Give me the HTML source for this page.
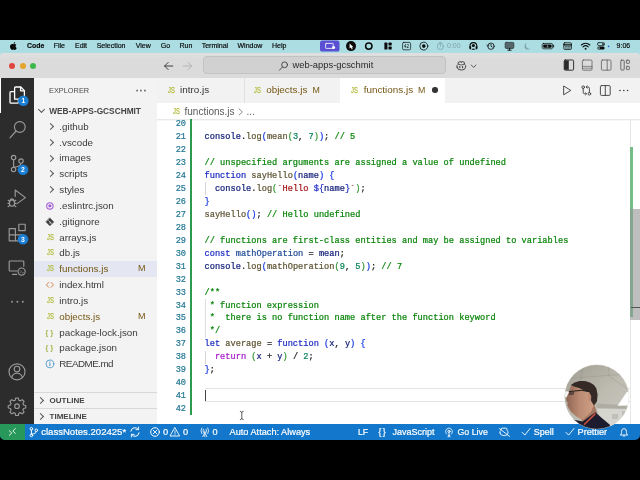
<!DOCTYPE html>
<html><head><meta charset="utf-8">
<style>
*{box-sizing:border-box;margin:0;padding:0}
html,body{width:640px;height:480px;overflow:hidden;background:#000;font-family:"Liberation Sans",sans-serif;}
.abs,.abs2 *{position:absolute}
div,span,i,svg{position:absolute}
#menubar{left:0;top:40px;width:640px;height:18px;background:#abdde3;font-size:7px;-webkit-text-stroke:0.18px #0b0b0b;color:#0b0b0b;line-height:12px;white-space:nowrap}
#menubar span{top:0}
#title{left:0;top:52.5px;width:640px;height:25.5px;background:linear-gradient(#e0e0e0,#dbdbdb 6px);border-radius:3.5px 3.5px 0 0}
.dot{top:10px;width:6.2px;height:6.2px;border-radius:50%}
#search{left:202.5px;top:3.9px;width:243.5px;height:17.2px;border-radius:4px;background:#d1d1d1;border:0.6px solid #c2c2c2;font-size:9.4px;color:#2a2a2a;line-height:16px;white-space:nowrap}
#act{left:0;top:78px;width:34px;height:346px;background:#2c2c2c}
#side{left:34px;top:78px;width:123px;z-index:2;height:346px;background:#f3f3f3;font-size:9.8px;color:#3b3b3b}
.row{left:0;width:123px;height:15.83px;line-height:15.83px;white-space:nowrap}
.row .ic{left:12.6px;top:0;width:12px;text-align:left;font-size:8.2px;font-weight:normal;transform:scaleX(0.71);transform-origin:0 50%;-webkit-text-stroke:0.25px currentColor}
.row .nm{left:25.3px;top:0}
.row .m{left:104px;top:0;color:#745714;font-size:9px}
.chev{left:14.2px;top:5.2px;width:5px;height:5px;border-right:0.8px solid #555;border-bottom:0.8px solid #555;transform:rotate(-45deg)}
#tabs{left:156px;top:78px;width:484px;height:24.5px;background:#f2f2f2;font-size:9.9px;color:#333}
.tab{top:0;height:24.5px;line-height:24.5px;white-space:nowrap}
.tab span{top:0.4px}
.tab span.js{top:1.2px}
.js{color:#b3bb3a;font-size:8.2px;font-weight:normal;transform:scaleX(0.71);transform-origin:0 50%;-webkit-text-stroke:0.25px #b3bb3a}
#crumb{left:156px;top:102.5px;width:484px;height:16px;background:#fff;font-size:10px;color:#5a5a5a;line-height:17px;white-space:nowrap}
#ed{left:156px;top:118.5px;width:484px;height:305.5px;background:#fff;font-family:"Liberation Mono",monospace;font-size:8.65px;overflow:hidden}
.ln{left:0;width:30px;text-align:right;color:#237893;height:13px;line-height:13px;-webkit-text-stroke:0.2px #237893}
.cl{left:48.5px;letter-spacing:0.022px;height:13px;line-height:13px;white-space:pre;color:#222;-webkit-text-stroke:0.22px currentColor}
.c{color:#0a850a;position:static}
.k{color:#1c2cc4;position:static}
.s{color:#a31515;position:static}
.n{color:#098658;position:static}
.f{color:#5e5434;position:static}
.v{color:#14207a;position:static}
.cv{color:#1f4a96;position:static}
.r{color:#a518c8;position:static}
.b1{color:#1438e0;position:static}
.b2{color:#319331;position:static}
#status{left:0;top:424px;width:640px;height:16px;background:#1377cb;color:#fff;font-size:9.2px;-webkit-text-stroke:0.2px #fff;line-height:16px;white-space:nowrap;border-radius:0 0 5px 5px;overflow:hidden}
#status span{top:0}
#root{left:0;top:0;width:640px;height:480px;will-change:transform;transform:translateZ(0)}
</style></head><body>
<div id="root">
<div id="menubar">
<span style="left:27px;font-weight:bold;font-size:6.9px">Code</span>
<span style="left:53.7px">File</span>
<span style="left:75px">Edit</span>
<span style="left:96.7px">Selection</span>
<span style="left:135.7px">View</span>
<span style="left:160.7px">Go</span>
<span style="left:179.5px">Run</span>
<span style="left:201.7px">Terminal</span>
<span style="left:237.5px">Window</span>
<span style="left:272px">Help</span>
<span style="left:447px;color:#7fa3a8;font-size:7px;-webkit-text-stroke:0">0:00</span>
<span style="left:616.6px">9:06</span>
<svg style="left:0;top:0" width="640" height="12.5" viewBox="0 0 640 12.5" fill="none" stroke="#0b0b0b" stroke-width="0.9" stroke-linecap="round" stroke-linejoin="round">
<!-- apple -->
<path d="M13.7 4.3 c0.9 -0.5 2 -0.3 2.7 0.5 c-1.2 0.8 -1.1 2.5 0.3 3.1 c-0.4 1 -1.1 2 -1.9 2 c-0.6 0 -0.8 -0.35 -1.4 -0.35 c-0.6 0 -0.85 0.35 -1.4 0.35 c-0.9 0 -2 -1.8 -2 -3.3 c0 -1.6 1.1 -2.5 2.1 -2.5 c0.65 0 1.1 0.3 1.6 0.2 z M13.6 3.9 c0 -0.9 0.7 -1.7 1.6 -1.8 c0.1 0.9 -0.7 1.8 -1.6 1.8 z" fill="#0b0b0b" stroke="none"/>
<!-- purple -->
<rect x="320" y="0.6" width="19.5" height="11" rx="2.2" fill="#5a4fd2" stroke="none"/>
<rect x="325.6" y="3.4" width="7.6" height="5" rx="0.6" stroke="#fff" stroke-width="0.8"/>
<circle cx="333.6" cy="7.6" r="1.5" fill="#fff" stroke="none"/>
<!-- cursor circle -->
<circle cx="351" cy="6.1" r="5" fill="#0b0b0b" stroke="none"/>
<path d="M349.6 3.4 v5.2 l1.3 -1.1 l0.9 1.9 l0.9 -0.4 l-0.9 -1.8 h1.7 z" fill="#fff" stroke="none"/>
<!-- ring -->
<circle cx="368.8" cy="6.1" r="3.2" stroke-width="1.5"/>
<!-- layout -->
<rect x="384.4" y="2.6" width="3" height="7" rx="0.7" fill="#0b0b0b" stroke="none"/>
<rect x="388.5" y="2.6" width="3.2" height="3" rx="0.7" fill="#0b0b0b" stroke="none"/>
<rect x="388.5" y="6.6" width="3.2" height="3" rx="0.7" fill="#0b0b0b" stroke="none"/>
<!-- 42 -->
<rect x="402.6" y="2.4" width="8" height="7.4" rx="1.2" stroke-width="0.7"/>
<text x="406.6" y="8" font-size="4.6" fill="#0b0b0b" stroke="none" text-anchor="middle" font-family="Liberation Sans, sans-serif">42</text>
<!-- record -->
<circle cx="423.8" cy="6.1" r="4" stroke-width="0.8"/><circle cx="423.8" cy="6.1" r="1.8" fill="#0b0b0b" stroke="none"/>
<!-- timer gray -->
<g stroke="#7fa3a8" stroke-width="0.8"><circle cx="440.4" cy="6.4" r="3.1"/><path d="M440.4 6.4 V4.6 M439.4 2.6 h2"/></g>
<!-- headset -->
<path d="M470 7.4 V6 a3.4 3.4 0 0 1 6.8 0 V7.4" stroke-width="1.1"/>
<rect x="469.4" y="6.2" width="1.8" height="3" rx="0.6" fill="#0b0b0b" stroke="none"/><rect x="475.6" y="6.2" width="1.8" height="3" rx="0.6" fill="#0b0b0b" stroke="none"/>
<circle cx="473.4" cy="5.6" r="1.5" fill="#0b0b0b" stroke="none"/>
<path d="M471.4 9.8 q2 -2.6 4 0 z" fill="#0b0b0b" stroke="none"/>
<!-- clock -->
<circle cx="491" cy="6.2" r="3.2" stroke-width="0.8"/><path d="M491 4.4 V6.2 l1.3 0.9" stroke-width="0.8"/><path d="M487 5 l0.8 1.4 l1.2 -1" stroke-width="0.7"/>
<!-- display -->
<rect x="505.2" y="2.4" width="8.6" height="6" rx="1" fill="#55676b" stroke="#2c383a" stroke-width="0.8"/><path d="M507.8 10.2 h3.4 M509.5 8.6 v1.4" stroke-width="0.9"/>
<!-- moon -->
<path d="M530.6 8.2 a3.4 3.4 0 1 1 -3.2 -5.4 a3 3 0 0 0 3.2 5.4 z" fill="#7c9ea4" stroke="none"/>
<!-- battery -->
<rect x="542.2" y="3.4" width="10.4" height="5.4" rx="1.4" stroke-width="0.7"/><rect x="543.2" y="4.4" width="8.4" height="3.4" rx="0.7" fill="#0b0b0b" stroke="none"/><path d="M553.6 5.2 v1.8" stroke-width="0.9"/>
<path d="M547.8 4.6 l-1.4 1.7 h1.2 l-0.5 1.4 l1.5 -1.8 h-1.2 z" fill="#abdde3" stroke="none"/>
<!-- calendar -->
<rect x="563.8" y="2.8" width="7.6" height="6.6" rx="0.9" stroke-width="0.8"/><path d="M563.8 4.8 h7.6" stroke-width="1.2"/><path d="M565.4 6.6 h1.4 M567.8 6.6 h2.4 M565.4 8 h1.4 M567.8 8 h2.4" stroke-width="0.6"/>
<!-- wifi -->
<path d="M581.4 5 a6 6 0 0 1 8.4 0" stroke-width="1.1"/><path d="M583 6.8 a3.8 3.8 0 0 1 5.2 0" stroke-width="1.1"/><circle cx="585.6" cy="8.8" r="0.95" fill="#0b0b0b" stroke="none"/>
<!-- control center -->
<rect x="597.4" y="2.6" width="7.2" height="3" rx="1.5" stroke-width="0.7"/><circle cx="603" cy="4.1" r="0.9" fill="#0b0b0b" stroke="none"/>
<rect x="597.4" y="6.6" width="7.2" height="3" rx="1.5" fill="#0b0b0b" stroke="none"/><circle cx="599" cy="8.1" r="0.8" fill="#abdde3" stroke="none"/>
<circle cx="608.6" cy="6.3" r="0.85" fill="#2a5fd8" stroke="none"/>
</svg>

</div>
<div id="title">
  <div class="dot" style="left:9.3px;background:#e0443e"></div>
  <div class="dot" style="left:19.5px;background:#e5a52c"></div>
  <div class="dot" style="left:29.5px;background:#3cb84c"></div>
  <div id="search"><span style="left:89px;top:0">web-apps-gcschmit</span></div>
<svg style="left:0;top:0" width="640" height="25.5" viewBox="0 0 640 25.5" fill="none" stroke="#3a3a3a" stroke-width="0.95" stroke-linecap="round" stroke-linejoin="round">
<path d="M172.8 13 H164.6 M168.2 9.4 L164.6 13 L168.2 16.6"/>
<path d="M183.4 13 H191.6 M188 9.4 L191.6 13 L188 16.6" stroke="#b4b4b4"/>
<circle cx="284.6" cy="11.8" r="2.9" stroke="#444"/><path d="M282.5 14 L279.4 17.2" stroke="#444"/>
<!-- copilot -->
<path d="M457 14.2 q-0.6 -2 1 -2.6 q-0.6 -3 2.4 -3 q0.9 0 0.9 0.9 q0 -0.9 0.9 -0.9 q3 0 2.4 3 q1.6 0.6 1 2.6 q-0.3 2.9 -4.3 2.9 q-4 0 -4.3 -2.9 z" stroke-width="0.9"/>
<path d="M459.8 13.4 v1.4 M462.6 13.4 v1.4" stroke-width="1"/>
<path d="M458.6 11.4 q2.6 1.4 5.2 0" stroke-width="0.8"/>
<path d="M471.2 12 l2.4 2.4 l2.4 -2.4" stroke="#444" stroke-width="0.85"/>
<!-- layout icons --><g transform="translate(0 -1)">
<rect x="564.2" y="8" width="9.4" height="10.2" rx="1.1" stroke="#2a2a2a"/><path d="M564.2 8.4 h4.6 v9.4 h-4.6 z" fill="#2a2a2a" stroke="none"/>
<rect x="582.4" y="8" width="9.6" height="10.2" rx="1.1" stroke="#666" stroke-width="0.85"/><path d="M582.4 14.4 h9.6 M582.4 16.2 h9.6" stroke="#666" stroke-width="0.7"/>
<rect x="601.4" y="8" width="9.6" height="10.2" rx="1.1" stroke="#666" stroke-width="0.85"/><path d="M607.2 8 v10.2" stroke="#666" stroke-width="0.85"/>
<rect x="620.8" y="8.2" width="3.4" height="9.8" rx="0.8" stroke="#555" stroke-width="0.85"/><rect x="626.4" y="8.2" width="3" height="3.2" rx="0.7" stroke="#555" stroke-width="0.85"/><rect x="626.4" y="14.4" width="3" height="3.2" rx="0.7" stroke="#555" stroke-width="0.85"/>
</g></svg>

</div>
<div id="act">
  <div style="left:0;top:0;width:1.4px;height:34.5px;background:#fff"></div>
<svg style="left:0;top:0" width="34" height="346" viewBox="0 0 34 346" fill="none" stroke="#9a9a9a" stroke-width="1.15" stroke-linejoin="round" stroke-linecap="round">
<!-- explorer -->
<g stroke="#ffffff" stroke-width="1.3">
<path d="M14.6 21.2 V10 q0 -1 1 -1 h5.2 l3.6 3.6 v7.6 q0 1 -1 1 z"/>
<path d="M20.6 9.2 v3.6 h3.6"/>
<path d="M14.4 13.6 h-3.4 q-1 0 -1 1 v9.6 q0 1 1 1 h6.4 q1 0 1 -1 v-3"/>
</g>
<circle cx="23.3" cy="22.8" r="5.3" fill="#1a7fd4" stroke="none"/>
<text x="23.3" y="25.2" font-size="6.8" font-weight="bold" fill="#fff" stroke="none" text-anchor="middle" font-family="Liberation Sans, sans-serif">1</text>
<!-- search -->
<circle cx="19.8" cy="49" r="5.4"/>
<path d="M16 53 L10 59.8"/>
<!-- source control -->
<circle cx="13.6" cy="79.6" r="2.2"/><circle cx="13.6" cy="91.4" r="2.2"/><circle cx="21" cy="83" r="2.2"/>
<path d="M13.6 81.8 V89.2 M21 85.2 q0 3.4 -7.4 4"/>
<circle cx="23" cy="91.8" r="5.3" fill="#1a7fd4" stroke="none"/>
<text x="23" y="94.2" font-size="6.8" font-weight="bold" fill="#fff" stroke="none" text-anchor="middle" font-family="Liberation Sans, sans-serif">2</text>
<!-- debug -->
<path d="M15.2 118.5 V112 L25.4 119.6 L17 125.6"/>
<ellipse cx="12" cy="125" rx="2.6" ry="3.2"/>
<path d="M8.2 122.2 l1.6 1 M8 125.4 h1.4 M8.2 128.6 l1.6 -1 M15.8 122.2 l-1.6 1 M16 125.4 h-1.4 M15.8 128.6 l-1.6 -1 M10.4 121.6 q1.6 -1.6 3.2 0"/>
<!-- extensions -->
<path d="M9.2 150.6 h6.2 v6.2 h-6.2 z M9.2 156.8 h6.2 v6 h-6.2 z M15.4 156.8 h6.2 v6 h-6.2 z M18.8 146.2 h6.4 v6.4 h-6.4 z"/>
<circle cx="23" cy="161.2" r="5.3" fill="#1a7fd4" stroke="none"/>
<text x="23" y="163.6" font-size="6.8" font-weight="bold" fill="#fff" stroke="none" text-anchor="middle" font-family="Liberation Sans, sans-serif">3</text>
<!-- remote explorer -->
<path d="M17 193 h-7 q-0.8 0 -0.8 -0.8 v-8.4 q0 -0.8 0.8 -0.8 h13 q0.8 0 0.8 0.8 v4.4 M12.6 196.4 h4"/>
<circle cx="21.6" cy="193.6" r="3.6"/>
<path d="M20.2 192.6 l1 1 l-1 1 M22.2 194.8 h1.2" stroke-width="0.7"/>
<!-- dots -->
<g fill="#9a9a9a" stroke="none"><circle cx="12" cy="223.8" r="0.95"/><circle cx="17.4" cy="223.8" r="0.95"/><circle cx="22.8" cy="223.8" r="0.95"/></g>
<!-- account -->
<circle cx="17" cy="293.8" r="8"/>
<circle cx="17" cy="291" r="2.8"/>
<path d="M11.6 299.6 q1 -4.4 5.4 -4.4 q4.4 0 5.4 4.4"/>
<!-- gear -->
<g transform="translate(17 328.2)">
<circle r="2.3"/>
<path id="gearp" d="M-1.3 -8.2 h2.6 l0.5 2.2 l1.5 0.65 l1.95 -1.2 l1.85 1.85 l-1.2 1.95 l0.65 1.5 l2.2 0.5 v2.6 l-2.2 0.5 l-0.65 1.5 l1.2 1.95 l-1.85 1.85 l-1.95 -1.2 l-1.5 0.65 l-0.5 2.2 h-2.6 l-0.5 -2.2 l-1.5 -0.65 l-1.95 1.2 l-1.85 -1.85 l1.2 -1.95 l-0.65 -1.5 l-2.2 -0.5 v-2.6 l2.2 -0.5 l0.65 -1.5 l-1.2 -1.95 l1.85 -1.85 l1.95 1.2 l1.5 -0.65 z"/>
</g>
</svg>

</div>
<div id="side">
  <div style="left:15.2px;top:6.7px;font-size:8.1px;color:#4c4c4c;line-height:11px;white-space:nowrap;transform:scaleX(0.91);transform-origin:0 50%">EXPLORER</div>
  <div style="left:101.2px;top:7px;font-size:11.5px;color:#555;line-height:11px;letter-spacing:0.1px;white-space:nowrap;-webkit-text-stroke:0.3px #555">···</div>
  <div class="row" style="top:25.9px;font-weight:bold;font-size:8.3px;color:#444"><i class="chev" style="left:5.4px;top:3.4px;transform:rotate(45deg)"></i><span class="nm" style="left:15.2px">WEB-APPS-GCSCHMIT</span></div>
  <div class="row" style="top:40.7px"><i class="chev"></i><span class="nm">.github</span></div>
  <div class="row" style="top:56.6px"><i class="chev"></i><span class="nm">.vscode</span></div>
  <div class="row" style="top:72.4px"><i class="chev"></i><span class="nm">images</span></div>
  <div class="row" style="top:88.2px"><i class="chev"></i><span class="nm">scripts</span></div>
  <div class="row" style="top:104.1px"><i class="chev"></i><span class="nm">styles</span></div>
  <div class="row" style="top:119.9px"><svg style="left:10px;top:0" width="12" height="15.83" viewBox="10 0 12 15.83" fill="none" stroke-linecap="round" stroke-linejoin="round"><circle cx="15.9" cy="7.9" r="3.2" stroke="#a35fd8" stroke-width="1.1"/><path d="M15.9 6.2 l1.5 0.85 v1.7 l-1.5 0.85 l-1.5 -0.85 v-1.7 z" fill="#a35fd8"/></svg><span class="nm">.eslintrc.json</span></div>
  <div class="row" style="top:135.7px"><svg style="left:10px;top:0" width="12" height="15.83" viewBox="10 0 12 15.83" fill="none" stroke-linecap="round" stroke-linejoin="round"><path d="M15.9 4 L19.8 7.9 L15.9 11.8 L12 7.9 Z" fill="#3c3c3c" stroke="#3c3c3c" stroke-width="0.5"/><path d="M14.6 6.6 L17 9 M16 7.9 v1.8" stroke="#f3f3f3" stroke-width="0.6"/><circle cx="17.2" cy="9" r="0.5" fill="#f3f3f3"/></svg><span class="nm">.gitignore</span></div>
  <div class="row" style="top:151.6px"><span class="ic" style="color:#b3bb3a">JS</span><span class="nm">arrays.js</span></div>
  <div class="row" style="top:167.4px"><span class="ic" style="color:#b3bb3a">JS</span><span class="nm">db.js</span></div>
  <div class="row" style="top:183.2px;background:#e4e6f1"><span class="ic" style="color:#b3bb3a">JS</span><span class="nm" style="color:#745714">functions.js</span><span class="m">M</span></div>
  <div class="row" style="top:199.1px"><svg style="left:10px;top:0" width="12" height="15.83" viewBox="10 0 12 15.83" fill="none" stroke-linecap="round" stroke-linejoin="round"><path d="M14.7 5.5 l-2.3 2.4 l2.3 2.4 M17.1 5.5 l2.3 2.4 l-2.3 2.4" stroke="#c9773a" stroke-width="0.9"/></svg><span class="nm">index.html</span></div>
  <div class="row" style="top:214.9px"><span class="ic" style="color:#b3bb3a">JS</span><span class="nm">intro.js</span></div>
  <div class="row" style="top:230.7px"><span class="ic" style="color:#b3bb3a">JS</span><span class="nm" style="color:#745714">objects.js</span><span class="m">M</span></div>
  <div class="row" style="top:246.6px"><span class="ic" style="color:#a5b040;font-size:7.8px;letter-spacing:2.2px;left:11.6px;width:auto;transform:none;-webkit-text-stroke:0.2px #a5b040">{}</span><span class="nm">package-lock.json</span></div>
  <div class="row" style="top:262.4px"><span class="ic" style="color:#a5b040;font-size:7.8px;letter-spacing:2.2px;left:11.6px;width:auto;transform:none;-webkit-text-stroke:0.2px #a5b040">{}</span><span class="nm">package.json</span></div>
  <div class="row" style="top:278.2px"><svg style="left:10px;top:0" width="12" height="15.83" viewBox="10 0 12 15.83" fill="none" stroke-linecap="round" stroke-linejoin="round"><circle cx="15.9" cy="7.9" r="3.9" stroke="#3a8fc7" stroke-width="0.8"/><path d="M15.9 7.4 v2.3" stroke="#3a8fc7" stroke-width="0.9"/><circle cx="15.9" cy="5.9" r="0.55" fill="#3a8fc7"/></svg><span class="nm" style="letter-spacing:-0.5px">README.md</span></div>
  <div style="left:0;top:314px;width:123px;height:0.8px;background:#d8d8d8"></div>
  <div class="row" style="top:315.0px;font-weight:bold;font-size:8px;color:#444"><i class="chev" style="left:4.4px;top:5px"></i><span class="nm" style="left:15.6px">OUTLINE</span></div>
  <div style="left:0;top:330.4px;width:123px;height:0.8px;background:#d8d8d8"></div>
  <div class="row" style="top:331.2px;font-weight:bold;font-size:8px;color:#444"><i class="chev" style="left:4.4px;top:5px"></i><span class="nm" style="left:15.6px">TIMELINE</span></div>
</div>
<div id="tabs">
  <div class="tab" style="left:0;width:88px"><span class="js" style="left:12px">JS</span><span style="left:24px">intro.js</span></div>
  <div style="left:87.6px;top:0;width:0.8px;height:24.5px;background:#e0e0e0"></div>
  <div class="tab" style="left:88px;width:96px"><span class="js" style="left:10px">JS</span><span style="left:22.2px;color:#745714">objects.js</span><span style="left:68.5px;color:#745714;font-size:8.8px">M</span></div>
  <div class="tab" style="left:184px;width:104.5px;background:#fff"><span class="js" style="left:11.3px">JS</span><span style="left:23.7px;color:#745714">functions.js</span><span style="left:78px;color:#745714;font-size:8.8px">M</span><span style="left:92px;top:9.3px;width:5.6px;height:5.6px;border-radius:50%;background:#333"></span></div>
<svg style="left:0;top:0" width="484" height="24.5" viewBox="0 0 484 24.5" fill="none" stroke="#3a3a3a" stroke-width="0.9" stroke-linecap="round" stroke-linejoin="round">
<path d="M408 8.2 L414.8 12.4 L408 16.6 Z"/>
<!-- compare -->
<circle cx="427.2" cy="9.2" r="1.3"/><circle cx="433.4" cy="15.8" r="1.3"/>
<path d="M427.2 10.6 V14.4 q0 1.4 1.4 1.4 h1.6 M433.4 14.4 V10.4 q0 -1.4 -1.4 -1.4 h-1.6"/>
<path d="M429.4 14.6 l1.2 1.2 l-1.2 1.2 M431.2 7.8 l-1.2 1.2 l1.2 1.2" stroke-width="0.75"/>
<!-- split -->
<rect x="444.4" y="7.6" width="9.8" height="9.8" rx="1" /><path d="M449.3 7.6 v9.8"/>
<g fill="#3a3a3a" stroke="none"><circle cx="464" cy="12.5" r="0.8"/><circle cx="467.8" cy="12.5" r="0.8"/><circle cx="471.6" cy="12.5" r="0.8"/></g>
</svg>

</div>
<div id="crumb"><span class="js" style="left:16.5px;top:0">JS</span><span style="left:28.5px;top:0">functions.js</span><svg style="left:82px;top:5px" width="6" height="8" viewBox="0 0 6 8" fill="none" stroke="#6a6a6a" stroke-width="0.8" stroke-linecap="round" stroke-linejoin="round"><path d="M1.2 1 L4.4 4 L1.2 7"/></svg><span style="left:90.6px;top:0;color:#666">...</span></div>
<div id="ed">
<div style="left:0;top:0;width:484px;height:2px;background:linear-gradient(#e2e2e2,#fff)"></div>
<div class="ln" style="top:-0.30px">20</div><div class="cl" style="top:-0.30px"></div>
<div class="ln" style="top:12.65px">21</div><div class="cl" style="top:12.65px"><span class="v">console</span>.<span class="f">log</span><span class="b1">(</span><span class="f">mean</span><span class="b2">(</span><span class="n">3</span>, <span class="n">7</span><span class="b2">)</span><span class="b1">)</span>; <span class="c">// 5</span></div>
<div class="ln" style="top:25.60px">22</div><div class="cl" style="top:25.60px"></div>
<div class="ln" style="top:38.55px">23</div><div class="cl" style="top:38.55px"><span class="c">// unspecified arguments are assigned a value of undefined</span></div>
<div class="ln" style="top:51.50px">24</div><div class="cl" style="top:51.50px"><span class="k">function</span> <span class="f">sayHello</span><span class="b1">(</span><span class="v">name</span><span class="b1">)</span> <span class="b1">{</span></div>
<div class="ln" style="top:64.45px">25</div><div class="cl" style="top:64.45px">  <span class="v">console</span>.<span class="f">log</span><span class="b2">(</span><span class="s">`Hello </span><span class="k">${</span><span class="v">name</span><span class="k">}</span><span class="s">`</span><span class="b2">)</span>;</div>
<div class="ln" style="top:77.40px">26</div><div class="cl" style="top:77.40px"><span class="b1">}</span></div>
<div class="ln" style="top:90.35px">27</div><div class="cl" style="top:90.35px"><span class="f">sayHello</span><span class="b1">()</span>; <span class="c">// Hello undefined</span></div>
<div class="ln" style="top:103.30px">28</div><div class="cl" style="top:103.30px"></div>
<div class="ln" style="top:116.25px">29</div><div class="cl" style="top:116.25px"><span class="c">// functions are first-class entities and may be assigned to variables</span></div>
<div class="ln" style="top:129.20px">30</div><div class="cl" style="top:129.20px"><span class="k">const</span> <span class="cv">mathOperation</span> = <span class="v">mean</span>;</div>
<div class="ln" style="top:142.15px">31</div><div class="cl" style="top:142.15px"><span class="v">console</span>.<span class="f">log</span><span class="b1">(</span><span class="f">mathOperation</span><span class="b2">(</span><span class="n">9</span>, <span class="n">5</span><span class="b2">)</span><span class="b1">)</span>; <span class="c">// 7</span></div>
<div class="ln" style="top:155.10px">32</div><div class="cl" style="top:155.10px"></div>
<div class="ln" style="top:168.05px">33</div><div class="cl" style="top:168.05px"><span class="c">/**</span></div>
<div class="ln" style="top:181.00px">34</div><div class="cl" style="top:181.00px"><span class="c"> * function expression</span></div>
<div class="ln" style="top:193.95px">35</div><div class="cl" style="top:193.95px"><span class="c"> *  there is no function name after the function keyword</span></div>
<div class="ln" style="top:206.90px">36</div><div class="cl" style="top:206.90px"><span class="c"> */</span></div>
<div class="ln" style="top:219.85px">37</div><div class="cl" style="top:219.85px"><span class="k">let</span> <span class="f">average</span> = <span class="k">function</span> <span class="b1">(</span><span class="v">x</span>, <span class="v">y</span><span class="b1">)</span> <span class="b1">{</span></div>
<div class="ln" style="top:232.80px">38</div><div class="cl" style="top:232.80px">  <span class="r">return</span> <span class="b2">(</span><span class="v">x</span> + <span class="v">y</span><span class="b2">)</span> / <span class="n">2</span>;</div>
<div class="ln" style="top:245.75px">39</div><div class="cl" style="top:245.75px"><span class="b1">}</span>;</div>
<div class="ln" style="top:258.70px">40</div><div class="cl" style="top:258.70px"></div>
<div class="ln" style="top:271.65px">41</div><div class="cl" style="top:271.65px"></div>
<div class="ln" style="top:284.60px">42</div><div class="cl" style="top:284.60px"></div>

<div style="left:33.5px;top:0;width:2.3px;height:296px;background:#2e9a4e"></div>
<div style="left:48.5px;top:269.7px;width:425.5px;height:13.5px;border-top:0.8px solid #e4e4e4;border-bottom:0.8px solid #e4e4e4"></div>
<div style="left:48.6px;top:271.2px;width:1.1px;height:11px;background:#444"></div>
<div style="left:48.8px;top:63.5px;width:0.8px;height:13px;background:#d6d6d6"></div>
<div style="left:48.8px;top:180.5px;width:0.8px;height:39px;background:#dedede"></div>
<div style="left:48.8px;top:232.5px;width:0.8px;height:13px;background:#d6d6d6"></div>
<div style="left:474px;top:0;width:0.8px;height:306px;background:#e6e6e6"></div>
<div style="left:474.2px;top:28px;width:3.3px;height:170px;background:#74bd88"></div>
<div style="left:474.2px;top:90.5px;width:10px;height:110.6px;background:#bebebe"></div>
<div style="left:474.2px;top:90.5px;width:3.3px;height:107.5px;background:#86a590"></div>
<div style="left:474.5px;top:188.3px;width:10px;height:1px;background:#555"></div>
</div>
<div id="status">
  <div style="left:0;top:0;width:24.6px;height:16px;background:#28985a"></div>
  <span style="left:41.2px;font-size:9.55px">classNotes.202425*</span>
  <span style="left:163px">0</span><span style="left:183px">0</span><span style="left:212.5px">0</span>
  <span style="left:229.5px">Auto Attach: Always</span>
  <span style="left:358px;font-size:8.6px">LF</span>
  <span style="left:392.5px;font-size:9px">JavaScript</span>
  <span style="left:457.5px;font-size:8.8px">Go Live</span>
  <span style="left:533.7px;font-size:9px">Spell</span>
  <span style="left:577.5px">Prettier</span>
<svg style="left:0;top:0" width="640" height="16" viewBox="0 0 640 16" fill="none" stroke="#fff" stroke-width="0.9" stroke-linecap="round" stroke-linejoin="round">
<path d="M9.2 6.6 l2.6 2.4 l-2.6 2.4 M15.4 4.6 l-2.6 2.4 l2.6 2.4" stroke-width="0.85"/>
<!-- branch -->
<circle cx="31.4" cy="4.8" r="1.3" stroke-width="1"/><circle cx="31.4" cy="11.4" r="1.3" stroke-width="1"/><circle cx="36.3" cy="6.3" r="1.3" stroke-width="1"/><path d="M31.4 6.1 V10.1 M36.3 7.6 q0 2.2 -4.9 2.6" stroke-width="1"/>
<!-- sync -->
<path d="M130.9 7.2 a4.1 4.1 0 0 1 7.4 -1.8 M139.1 8.8 a4.1 4.1 0 0 1 -7.4 1.8" stroke-width="1"/><path d="M138.6 3 v2.6 h-2.6 M131.4 13 v-2.6 h2.6" stroke-width="0.9"/>
<!-- error -->
<circle cx="155" cy="8" r="4.3" stroke-width="1"/><path d="M153.3 6.3 l3.4 3.4 M156.7 6.3 l-3.4 3.4" stroke-width="0.9"/>
<!-- warning -->
<path d="M175 3.8 L179.6 12 H170.4 Z"/><path d="M175 6.6 v2.8 M175 10.6 v0.2" stroke-width="0.8"/>
<!-- antenna -->
<path d="M204.8 7 V12.6 M202.8 12.6 l2 -4.4 l2 4.4 M201.8 4 q-1.8 2.8 0 5.6 M207.8 4 q1.8 2.8 0 5.6 M203.4 5.2 q-0.9 1.6 0 3.2 M206.2 5.2 q0.9 1.6 0 3.2" stroke-width="0.8"/>
<!-- go live -->
<circle cx="449" cy="7.4" r="1.1"/><path d="M446.8 10.2 a3.4 3.4 0 1 1 4.4 0 M449 8.6 v4.2 M448 12.8 l1 -2 l1 2" stroke-width="0.8"/>
<!-- copilot -->
<path d="M500 9 q-0.6 -1.8 0.9 -2.4 q-0.5 -2.7 2.2 -2.7 q0.9 0 0.9 0.8 q0 -0.8 0.9 -0.8 q2.7 0 2.2 2.7 q1.5 0.6 0.9 2.4 q-0.3 2.7 -4 2.7 q-3.7 0 -4 -2.7 z" stroke-width="0.85"/><path d="M499.4 4.6 L509.6 12.4" stroke-width="0.85"/>
<!-- checks -->
<path d="M522.2 8.4 l2.6 2.7 l5.2 -6.6" stroke-width="0.9"/>
<path d="M566 8.4 l2.6 2.7 l5.4 -6.6" stroke-width="0.9"/>
<!-- bell -->
<path d="M620.6 10.8 q1 -0.8 1 -2.4 v-1.2 a2.4 2.6 0 0 1 4.8 0 v1.2 q0 1.6 1 2.4 z M623.2 12 q0.8 0.9 1.6 0"/>
</svg>
<span style="left:378.6px;top:-0.5px;font-size:8.6px;letter-spacing:1.2px">{}</span>

</div>
<svg style="left:238px;top:409px" width="8" height="13" viewBox="238 409 8 13" fill="none" stroke="#333" stroke-width="0.8" stroke-linecap="round"><path d="M241.8 412.4 V418.6 M240.3 411.3 q1.2 0.2 1.5 1.1 q0.3 -0.9 1.5 -1.1 M240.3 419.7 q1.2 -0.2 1.5 -1.1 q0.3 0.9 1.5 1.1"/></svg>
<svg style="left:560px;top:360px" width="80" height="80" viewBox="560 360 80 80">
<defs>
<clipPath id="wc"><circle cx="596.8" cy="396.9" r="32.2"/></clipPath>
<linearGradient id="ceil" x1="0" y1="0" x2="0.8" y2="1"><stop offset="0.1" stop-color="#a19e93"/><stop offset="0.5" stop-color="#bdbbb0"/><stop offset="0.9" stop-color="#cccbc2"/></linearGradient>
<linearGradient id="face" x1="0" y1="0" x2="1" y2="0"><stop offset="0" stop-color="#8e6453"/><stop offset="0.45" stop-color="#b98970"/><stop offset="1" stop-color="#cf9f86"/></linearGradient>
<filter id="bl" x="-10%" y="-10%" width="120%" height="120%"><feGaussianBlur stdDeviation="0.6"/></filter>
</defs>
<g clip-path="url(#wc)">
<rect x="560" y="360" width="80" height="80" fill="url(#ceil)"/>
<g filter="url(#bl)">
<path d="M560 379 L640 373 M584 360 L581 380 M608 360 L609 376 M581 380 L560 396 M609 376 L632 392" stroke="#8e8b81" stroke-width="0.6" fill="none" opacity="0.55"/>
<path d="M596 403.5 L630 405.5 V409 L597 408.5 Z" fill="#aeaca3"/>
<path d="M597 408.5 L630 409 V430 H604 Z" fill="#d6d6cf"/>
<path d="M612 414 h6 v5 h-6 z M622 411 h5 v8 h-5 z" fill="#bfc0ba"/>
<path d="M630 390.8 L626.6 392.2 L617.6 405.8 L630 405.4 Z" fill="#ffffff"/>
<path d="M564 391.2 L569.6 391.4 L568 397 L564 397 Z" fill="#f2f2ee"/>
<!-- neck -->
<path d="M578 414 L593.6 402 L597 413 L583 422.5 Z" fill="#a67762"/>
<!-- face -->
<path d="M571.2 385.2 L569 392 L566.2 398.6 L566.6 401.4 L567.8 402.8 L567.4 405.4 L568.6 408 L571.2 412 L576.4 416.4 L582.6 420 L591 412 L593.8 405 L590.8 400.6 L589.2 392.2 L584 390.6 L576.4 386.2 Z" fill="url(#face)"/>
<!-- ear -->
<path d="M588.6 392.4 q2.8 0.6 2.8 4.6 q0 3.4 -2.2 4.4 q-1.6 -4 -0.6 -9 z" fill="#c08a72"/>
<!-- hair -->
<path d="M570.8 385 L574.6 382.6 L579.6 381 L585 380.9 L590 382.4 L594 385 L596.4 388.4 L597.6 394.4 L597 401.6 L594 405.4 L591 400.8 L591.2 396 L589.4 392.4 L584 390.6 L579 388 L574 386.6 Z" fill="#352b26"/>
<!-- glasses -->
<path d="M568.8 391.6 L574.6 391 L581.6 390.4 L588.6 391.4" stroke="#221d1c" stroke-width="1" fill="none"/>
<path d="M569 391.8 l0.2 3.4 l4.6 -0.4 l0.8 -3.6 z" fill="#4a3a36" opacity="0.75"/>
<!-- shirt -->
<path d="M573 419.4 L582.6 421.6 L595.4 412.2 L601.2 417.6 L609.6 424.4 L612.4 432 H571 Z" fill="#1b1e2e"/>
<path d="M595.4 413.6 L584 424.8" stroke="#cf4f3c" stroke-width="1.5" fill="none"/>
</g>
</g>
<circle cx="596.8" cy="396.9" r="32.2" fill="none" stroke="#e8e4dc" stroke-width="0.5" opacity="0.6"/>
</svg>

</div>
</body></html>
